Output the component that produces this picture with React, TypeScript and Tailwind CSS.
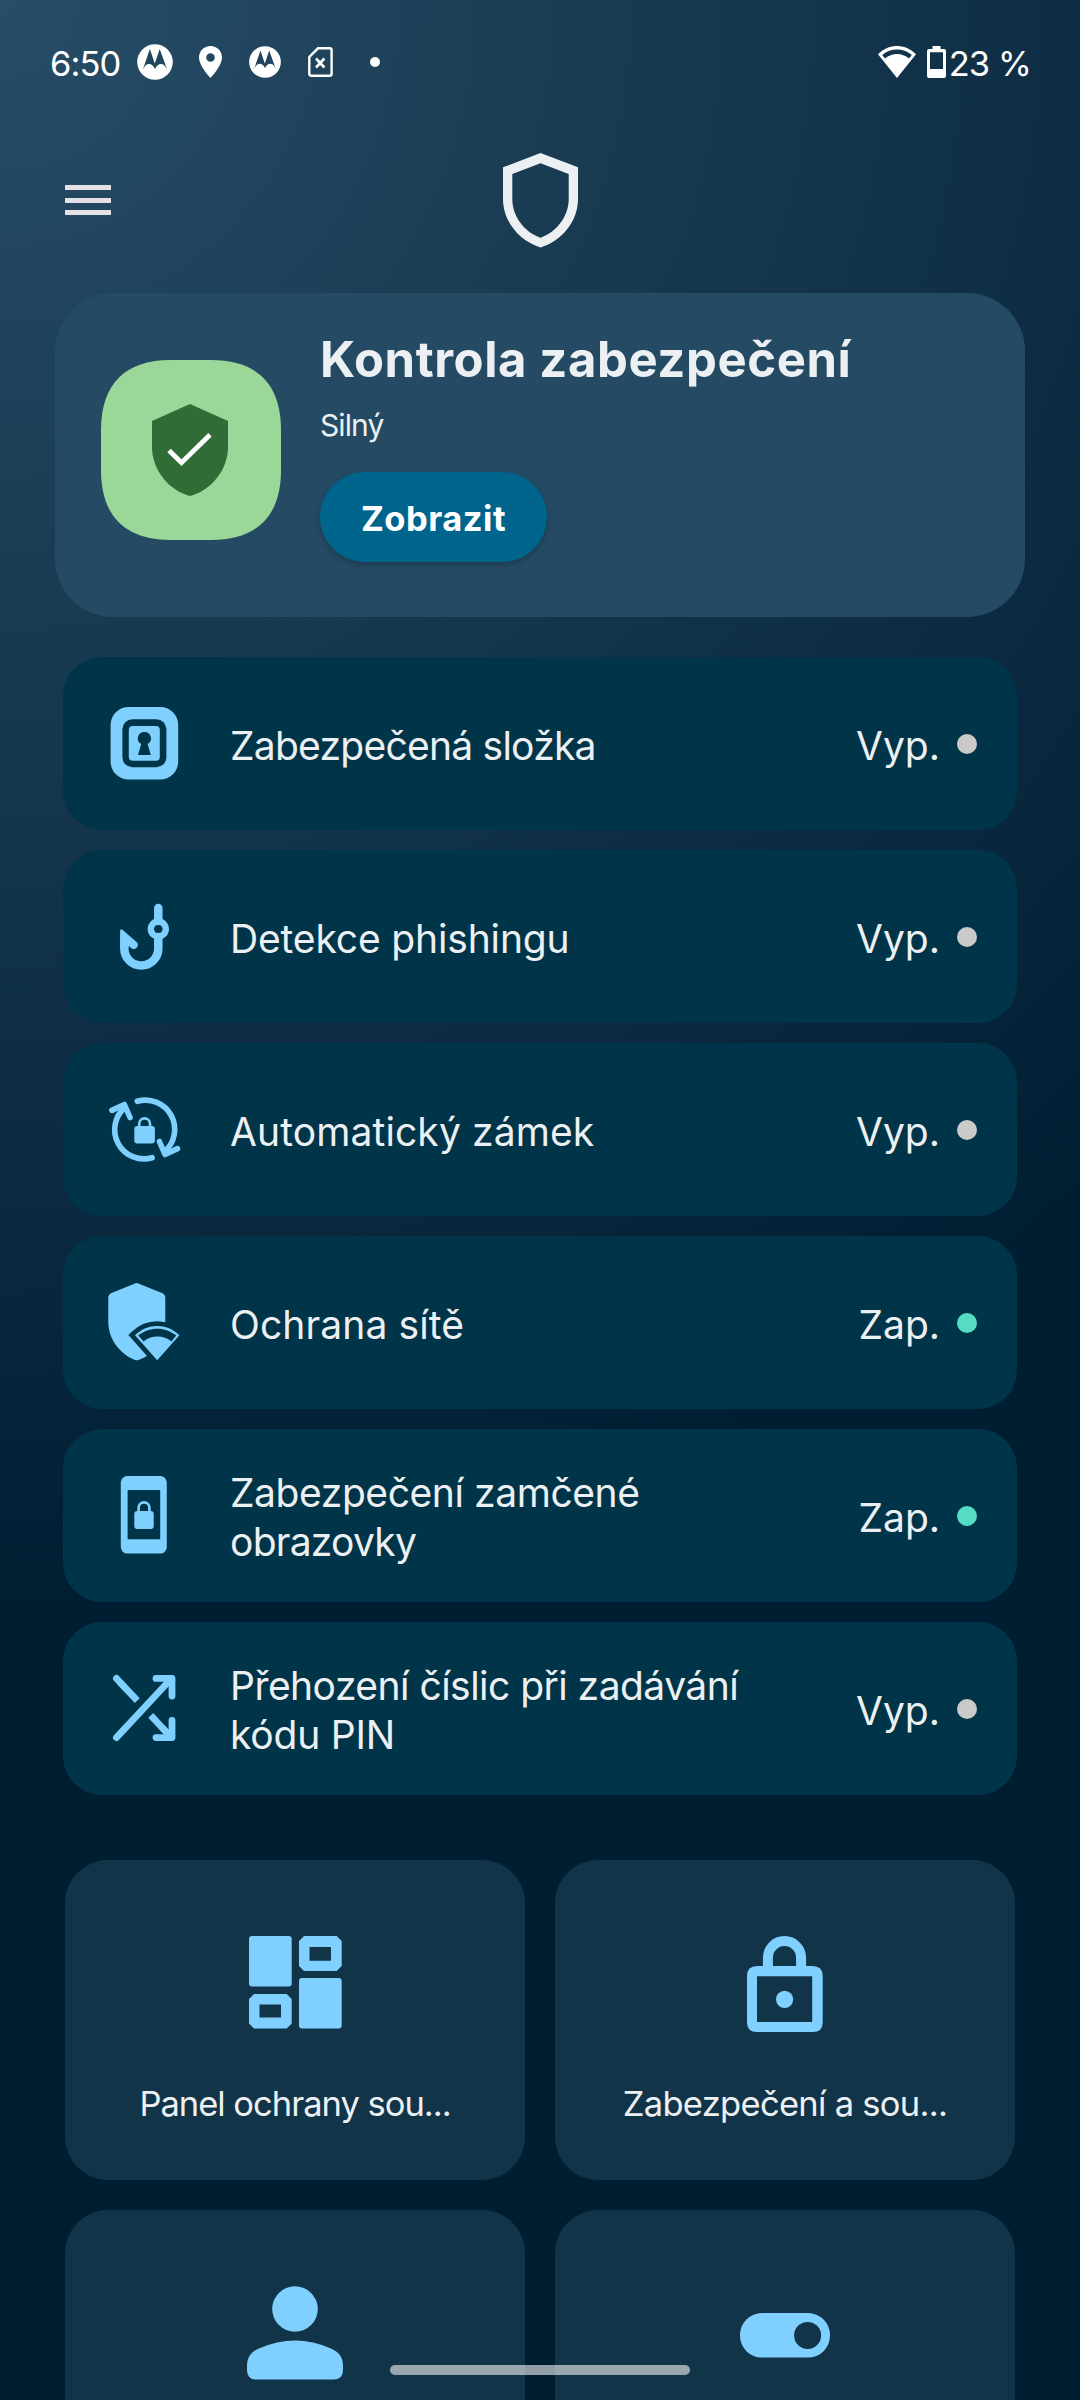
import type { ReactNode } from "react";

const BLUE = "#7fd0ff";
const ROW = "#003549";
const TILE = "#123448";

function MotoIcon({ className }: { className: string }) {
  return (
    <svg className={className} viewBox="0 0 36 36">
      <circle cx="18" cy="18" r="17.8" fill="#fff" />
      <path
        d="M5 28 L12.9 5 L17.8 19.6 L22.7 5 L31 28 C29.4 23.4 27.2 20 24.2 20 C21.4 20 19.2 22 18 25 C16.8 22 14.6 20 11.8 20 C8.8 20 6.6 23.4 5 28 Z"
        fill="#20455d"
      />
    </svg>
  );
}

function StatusBar() {
  return (
    <div className="flex h-[124px] items-center pr-[49px] pl-[50px] text-white">
      <span className="w-[87px] pt-[3px] text-[34.5px] leading-10 tracking-[-0.9px]">6:50</span>
      <MotoIcon className="size-9" />
      <svg className="ml-[26px] h-8 w-[23px]" viewBox="0 0 23 32">
        <path
          fillRule="evenodd"
          fill="#fff"
          d="M11.5 0 C5 0 0 5 0 11.5 C0 20 11.5 32 11.5 32 C11.5 32 23 20 23 11.5 C23 5 18 0 11.5 0 Z M11.5 7.2 a4.3 4.3 0 1 1 0 8.6 a4.3 4.3 0 1 1 0 -8.6 Z"
        />
      </svg>
      <MotoIcon className="ml-[27px] size-8" />
      <svg className="ml-[27px] h-[30px] w-[25px]" viewBox="0 0 25 30" fill="none" stroke="#fff">
        <path d="M10 1.3 H21.6 Q23.6 1.3 23.6 3.3 V26.7 Q23.6 28.7 21.6 28.7 H3.3 Q1.3 28.7 1.3 26.7 V10 Z" strokeWidth="2.4" />
        <path d="M8 11.5 L16.4 20.5 M16.4 11.5 L8 20.5" strokeWidth="2.6" />
      </svg>
      <span className="ml-[37px] size-[10px] rounded-full bg-white" />
      <svg className="ml-auto h-8 w-[38px]" viewBox="0 0 38 32">
        <path d="M0 8.3 C11 -2.8 27 -2.8 38 8.3 L19 32 Z" fill="#fff" />
        <path d="M4.2 8.9 C13 1.7 25 1.7 33.8 8.9 L31 12.4 C24 6.4 14 6.4 7 12.4 Z" fill="#11344a" />
      </svg>
      <svg className="ml-[11px] h-8 w-[19px]" viewBox="0 0 19 32">
        <path
          fillRule="evenodd"
          fill="#fff"
          d="M5.5 0 H13.5 V3 H17 Q19 3 19 5 V30 Q19 32 17 32 H2 Q0 32 0 30 V5 Q0 3 2 3 H5.5 Z M3 6.2 V23 H16 V6.2 Z"
        />
      </svg>
      <span className="ml-[3px] pt-[3px] text-[34.5px] leading-10 tracking-[-0.9px] whitespace-nowrap">23 %</span>
    </div>
  );
}

function Header() {
  return (
    <header className="grid h-[152px] grid-cols-3 items-center">
      <button className="ml-[65px] flex w-[46px] flex-col gap-[7.5px]" aria-label="Menu">
        <span className="h-[5px] bg-[#e6e1e6]" />
        <span className="h-[5px] bg-[#e6e1e6]" />
        <span className="h-[5px] bg-[#e6e1e6]" />
      </button>
      <svg className="h-[95px] w-[75px] justify-self-center" viewBox="0 0 75 95">
        <path
          fillRule="evenodd"
          fill="#edf0f2"
          d="M0 14.3 L37.5 0 L75 14.3 V46 C75 68 59 88 37.5 94.4 C16 88 0 68 0 46 Z M9.3 21 V46 C9.3 63 21 79 37.5 84.7 C54 79 65.7 63 65.7 46 V21 L37.5 10.3 Z"
        />
      </svg>
    </header>
  );
}

function CheckupCard() {
  return (
    <section className="mx-[55px] mt-[17px] flex h-[324px] rounded-[58px] bg-[#254b64] pl-[46px]">
      <svg className="mt-[67px] size-[180px]" viewBox="0 0 180 180">
        <path
          d="M0 70 C0 24 24 0 70 0 H110 C156 0 180 24 180 70 V110 C180 156 156 180 110 180 H70 C24 180 0 156 0 110 Z"
          fill="#9bd798"
        />
        <path d="M89 44 L127 61 V87 C127 110 110 130.5 89 136 C68 130.5 51 110 51 87 V61 Z" fill="#316b35" />
        <path d="M68 90.5 L80.5 102.7 L109 74.7" fill="none" stroke="#fff" strokeWidth="4.8" />
      </svg>
      <div className="ml-[39px] flex flex-col items-start pt-[37px]">
        <h1 className="text-[49px] leading-[60px] font-bold tracking-[0.6px] text-[#edf0f2]">Kontrola zabezpečení</h1>
        <p className="mt-[15px] text-[30px] leading-10 tracking-[-0.9px] text-[#edf0f2]">Silný</p>
        <button className="mt-[27px] flex h-[90px] w-[227px] items-center justify-center rounded-full bg-[#00658d] pt-[3px] text-[34.5px] font-bold tracking-[0.5px] text-white shadow-[0_3px_6px_rgba(0,0,0,0.22)]">
          Zobrazit
        </button>
      </div>
    </section>
  );
}

function Icon80({ children }: { children: ReactNode }) {
  return (
    <svg className="mt-[46px] size-20 shrink-0 self-start" viewBox="0 0 80 80">
      {children}
    </svg>
  );
}

const folderIcon = (
  <Icon80>
    <rect x="6.6" y="4" width="67.6" height="72.6" rx="18" fill={BLUE} />
    <rect x="18.4" y="16.3" width="44" height="48" rx="10" fill={ROW} />
    <rect x="24.8" y="23" width="31" height="34.7" rx="4" fill={BLUE} />
    <path d="M40.4 28.9 a6.5 6.5 0 0 1 3.2 12.2 L46.8 52 H34 L37.2 41.1 A6.5 6.5 0 0 1 40.4 28.9 Z" fill={ROW} />
  </Icon80>
);

const hookIcon = (
  <Icon80>
    <path d="M54.3 12 V25 M54.3 41 V52.5 A17 17 0 0 1 20.3 52.5 V44" fill="none" stroke={BLUE} strokeWidth="8.5" strokeLinecap="round" />
    <circle cx="54.3" cy="33" r="7.5" fill="none" stroke={BLUE} strokeWidth="6.4" />
    <path d="M16.1 52 V35.6 Q16.2 31.6 19 34.2 L32.6 46 Q35 48.6 33 51.5 Q30 54.5 27 52 L24.5 49.5 V52 Z" fill={BLUE} />
  </Icon80>
);

const autoLockIcon = (
  <Icon80>
    <g fill="none" stroke={BLUE} strokeWidth="5.6" strokeLinecap="round" strokeLinejoin="round">
      <path d="M33.3 12.3 A29.2 29.2 0 0 1 60.5 62.5" />
      <path d="M55.4 52.5 L61 65.5 L73.5 59.6" />
      <path d="M48.1 68.7 A29.2 29.2 0 0 1 20.9 18.5" />
      <path d="M26 28.5 L20.4 15.5 L7.9 21.4" />
    </g>
    <rect x="30.3" y="37" width="20.6" height="17.4" rx="3" fill={BLUE} />
    <path d="M35.2 38 V34.8 a5.4 5.4 0 0 1 10.8 0 V38" fill="none" stroke={BLUE} strokeWidth="2.6" />
  </Icon80>
);

const netShieldIcon = (
  <Icon80>
    <path
      d="M31 1.5 Q32.6 0.7 34.2 1.5 L58 11 Q61.3 12.4 61.3 16 V40 C61.3 58 48 74 34.5 78 Q32.7 78.6 31 78 C17 72.5 4.3 58 4.3 40 V16 Q4.3 12.4 7.5 11 Z"
      fill={BLUE}
    />
    <path d="M31 53.2 C44 41 62.5 41 75.4 53.2 L53.2 78.3 Z" fill={ROW} stroke={ROW} strokeWidth="9.5" strokeLinejoin="miter" />
    <path d="M31 53.2 C44 41 62.5 41 75.4 53.2 L53.2 78.3 Z" fill={BLUE} />
    <path d="M34.2 53.6 C45 44.3 61.5 44.3 72.2 53.6 L67.4 59.6 C60 52.9 47 52.9 39.6 59.6 Z" fill={ROW} />
  </Icon80>
);

const phoneLockIcon = (
  <Icon80>
    <rect x="16.8" y="1" width="46" height="77.6" rx="6.5" fill={BLUE} />
    <rect x="23.6" y="15" width="32.6" height="49.3" fill={ROW} />
    <rect x="30.3" y="36" width="19.4" height="18" rx="3" fill={BLUE} />
    <path d="M34.6 37 V32.8 a5.4 5.4 0 0 1 10.8 0 V37" fill="none" stroke={BLUE} strokeWidth="2.6" />
  </Icon80>
);

const shuffleIcon = (
  <Icon80>
    <g fill="none" stroke={BLUE} strokeWidth="6.8">
      <g strokeLinecap="round" strokeLinejoin="round">
        <path d="M12.4 69.6 L66.5 11.5" />
        <path d="M52 10.4 H68 V28" />
        <path d="M52 69.6 H68 V52.4" />
        <path d="M12.4 10.4 L20 18.5" />
        <path d="M60 61.5 L66.5 68.5" />
      </g>
      <path d="M16 14.3 L33.3 32.6" />
      <path d="M46.8 47.4 L64 66" />
    </g>
  </Icon80>
);

type Feature = { icon: ReactNode; lines: { text: string; cls: string }[]; on: boolean };

const features: Feature[] = [
  { icon: folderIcon, lines: [{ text: "Zabezpečená složka", cls: "tracking-[-0.75px]" }], on: false },
  { icon: hookIcon, lines: [{ text: "Detekce phishingu", cls: "tracking-[-0.15px]" }], on: false },
  { icon: autoLockIcon, lines: [{ text: "Automatický zámek", cls: "tracking-[0.12px]" }], on: false },
  { icon: netShieldIcon, lines: [{ text: "Ochrana sítě", cls: "tracking-[0.1px]" }], on: true },
  {
    icon: phoneLockIcon,
    lines: [
      { text: "Zabezpečení zamčené", cls: "tracking-[-0.42px]" },
      { text: "obrazovky", cls: "tracking-[-0.75px]" },
    ],
    on: true,
  },
  {
    icon: shuffleIcon,
    lines: [
      { text: "Přehození číslic při zadávání", cls: "tracking-[-0.53px]" },
      { text: "kódu PIN", cls: "tracking-[-0.2px]" },
    ],
    on: false,
  },
];

function FeatureRow({ icon, lines, on }: Feature) {
  return (
    <li className="flex h-[173px] items-center rounded-[39px] bg-[#003549] pr-[40px] pl-[41px] text-[39px] leading-[49px] text-[#edf0f2]">
      {icon}
      <div className="ml-[46px] flex flex-1 flex-col pt-[3px] whitespace-nowrap">
        {lines.map((l) => (
          <span key={l.text} className={l.cls}>
            {l.text}
          </span>
        ))}
      </div>
      <span className="mr-[17px] pt-[3px]">{on ? "Zap." : "Vyp."}</span>
      <span className={on ? "size-5 rounded-full bg-[#57dcc4]" : "size-5 rounded-full bg-[#cacaca]"} />
    </li>
  );
}

function Icon100({ children }: { children: ReactNode }) {
  return (
    <svg className="h-[104px] w-[100px]" viewBox="0 0 100 104">
      {children}
    </svg>
  );
}

function Tile({ icon, label, cls }: { icon: ReactNode; label?: string; cls?: string }) {
  return (
    <div className="flex h-[320px] flex-col items-center rounded-[43px] bg-[#123448] pt-[72px]">
      <Icon100>{icon}</Icon100>
      {label && (
        <span className={`mt-[46px] text-[34.5px] leading-[44px] whitespace-nowrap text-[#edf0f2] ${cls}`}>{label}</span>
      )}
    </div>
  );
}

const dashboardIcon = (
  <g fill={BLUE}>
    <rect x="4" y="4" width="42.7" height="50.4" rx="3" />
    <rect x="54" y="46" width="42.7" height="50.6" rx="3" />
    <path fillRule="evenodd" d="M59 4 H91.7 L96.7 9 V34 L91.7 39 H59 L54 34 V9 Z M64.5 15 V28.8 H86 V15 Z" />
    <path fillRule="evenodd" d="M9 62 H41.7 L46.7 67 V91.6 L41.7 96.6 H9 L4 91.6 V67 Z M14.5 72.6 V85.6 H36 V72.6 Z" />
  </g>
);

const lockIcon = (
  <g>
    <path
      fillRule="evenodd"
      fill={BLUE}
      d="M22 34 H77.7 Q87.7 34 87.7 44 V90.2 Q87.7 100 77.7 100 H22 Q12 100 12 90.2 V44 Q12 34 22 34 Z M22 44.2 V90 H77.2 V44.2 Z"
    />
    <path d="M32.9 38 V25.7 a16.6 16.6 0 0 1 33.2 0 V38" fill="none" stroke={BLUE} strokeWidth="10" />
    <circle cx="49.6" cy="67.3" r="8.6" fill={BLUE} />
  </g>
);

const personIcon = (
  <g fill={BLUE}>
    <circle cx="50" cy="27" r="22.8" />
    <path d="M2 84 C2 75 6 70 14 66.5 C38 55.8 62 55.8 86 66.5 C94 70 98 75 98 84 V88 Q98 97.6 88.5 97.6 H11.5 Q2 97.6 2 88 Z" />
  </g>
);

const toggleIcon = (
  <g>
    <rect x="5" y="31" width="90" height="44.6" rx="22" fill={BLUE} />
    <circle cx="72.6" cy="53.4" r="13.5" fill={TILE} />
  </g>
);

export default function App() {
  return (
    <main className="relative h-[2400px] w-[1080px] overflow-hidden bg-[#001e32] bg-[radial-gradient(circle_1620px_at_0_0,#274d67_0%,#183a50_40%,#0e2d44_67%,#001e32_100%)] font-['Inter',sans-serif]">
      <StatusBar />
      <Header />
      <CheckupCard />
      <ul className="mt-10 flex flex-col gap-5 px-[63px]">
        {features.map((f) => (
          <FeatureRow key={f.lines[0].text} {...f} />
        ))}
      </ul>
      <div className="mt-[65px] grid grid-cols-2 gap-[30px] px-[65px]">
        <Tile icon={dashboardIcon} label="Panel ochrany sou..." cls="tracking-[-1px]" />
        <Tile icon={lockIcon} label="Zabezpečení a sou..." cls="tracking-[-0.7px]" />
        <Tile icon={personIcon} />
        <Tile icon={toggleIcon} />
      </div>
      <div className="absolute bottom-[25px] left-[390px] h-[10px] w-[300px] rounded-full bg-white/57" />
    </main>
  );
}
